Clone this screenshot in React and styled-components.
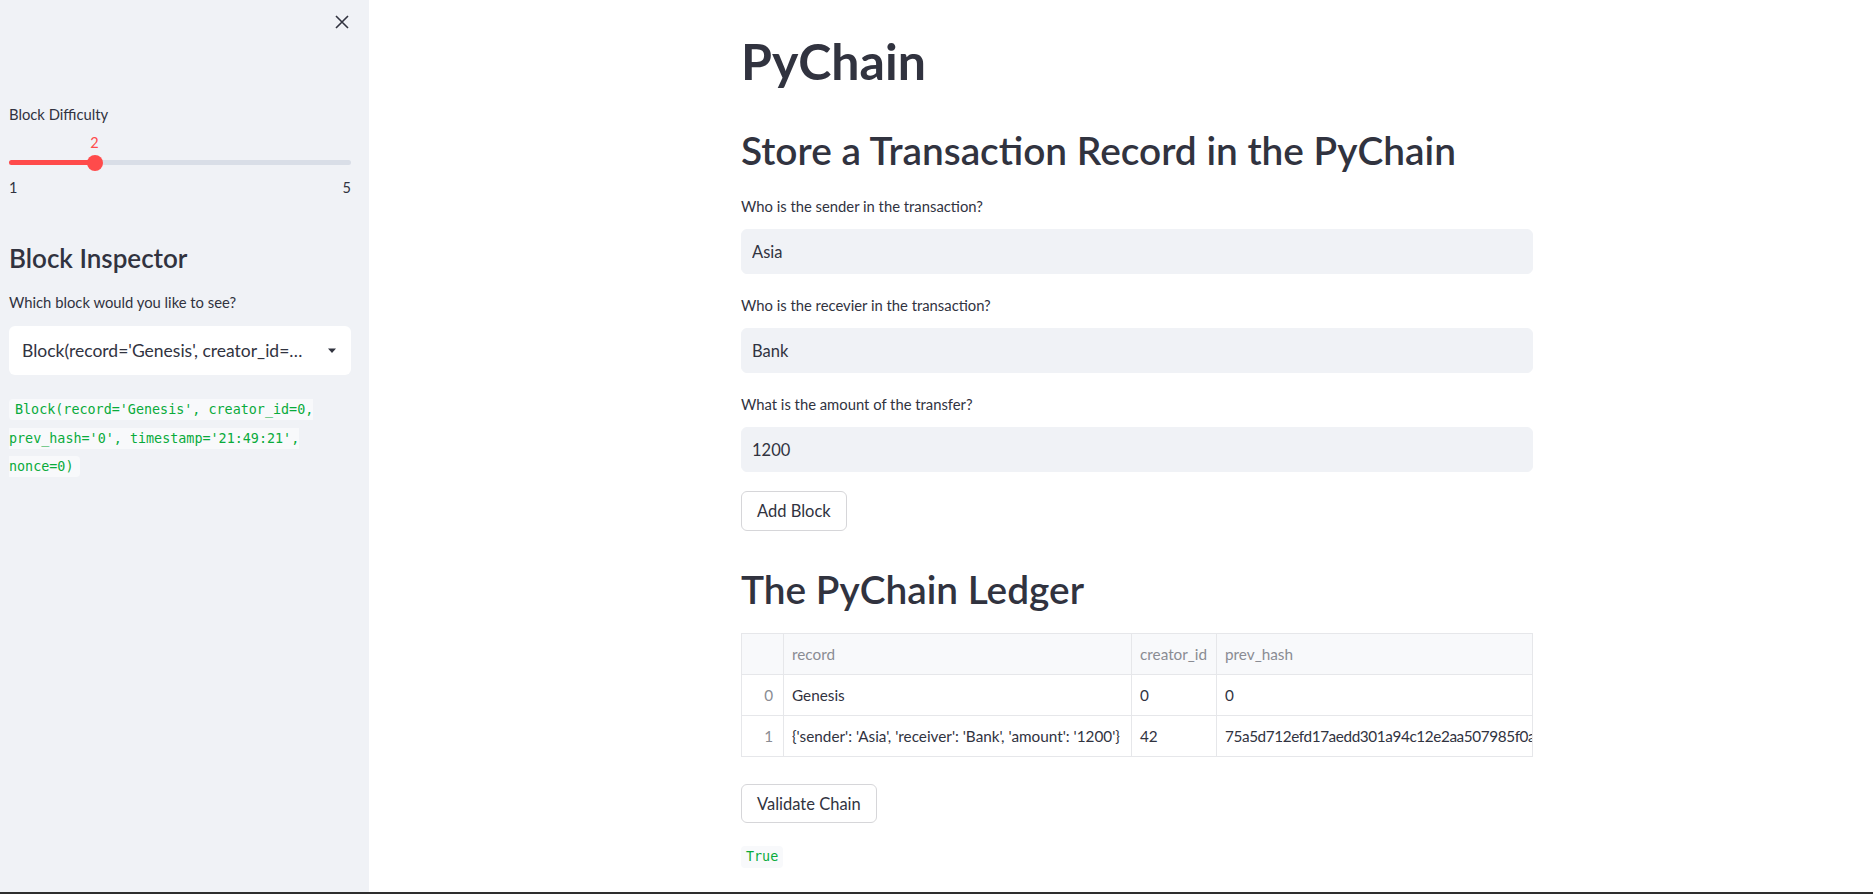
import React from 'react'
import styled, { createGlobalStyle } from 'styled-components'

const GlobalStyle = createGlobalStyle`
  body {
    margin: 0;
    font-family: Lato, "Open Sans", sans-serif;
    color: #31333f;
    background: #ffffff;
  }
  * { box-sizing: border-box; }
`;

const Page = styled.div`
  display: flex;
  height: 894px;
  border-bottom: 2px solid #2e2e2e;
  overflow: hidden;
`;

const Sidebar = styled.aside`
  width: 369px;
  flex-shrink: 0;
  background: #f0f2f6;
  padding: 0 18px 0 9px;
  display: flex;
  flex-direction: column;
`;

const TopBar = styled.div`
  height: 44px;
  display: flex;
  justify-content: flex-end;
  align-items: center;
  margin-right: -18px;
  padding-right: 19px;
`;

const CloseButton = styled.button`
  border: none;
  background: none;
  padding: 0;
  width: 16px;
  height: 16px;
  display: flex;
  align-items: center;
  justify-content: center;
  color: #31333f;
`;

const Label = styled.div`
  font-size: 14.8px;
  line-height: 17px;
  color: #31333f;
  margin-top: ${p => p.top || 0}px;
  margin-bottom: ${p => p.bottom || 0}px;
`;

const SliderTrack = styled.div`
  position: relative;
  height: 5px;
  margin-top: 37px;
  border-radius: 3px;
  background: #d9dee7;
`;

const SliderFill = styled.div`
  height: 100%;
  border-radius: 3px;
  background: #ff4b4b;
`;

const SliderThumb = styled.div`
  position: absolute;
  top: 50%;
  width: 16px;
  height: 16px;
  border-radius: 50%;
  background: #ff4b4b;
  transform: translate(-50%, -50%);
`;

const SliderValue = styled.div`
  position: absolute;
  top: -26px;
  font-size: 14.5px;
  line-height: 18px;
  color: #ff4b4b;
  transform: translateX(-50%);
`;

const TickRow = styled.div`
  display: flex;
  justify-content: space-between;
  margin-top: 14px;
  font-size: 14.5px;
  line-height: 18px;
  color: #31333f;
`;

const SideHeading = styled.h2`
  margin: 45px 0 0;
  font-size: 26px;
  line-height: 32px;
  font-weight: 600;
  color: #31333f;
`;

const Select = styled.div`
  height: 49px;
  margin-top: 15px;
  background: #ffffff;
  border-radius: 6px;
  display: flex;
  align-items: center;
  padding: 0 14px 0 13px;
  gap: 22px;
`;

const SelectText = styled.div`
  flex: 1;
  min-width: 0;
  font-size: 17.5px;
  white-space: nowrap;
  overflow: hidden;
  text-overflow: ellipsis;
`;

const CodeBlock = styled.div`
  margin-top: 21px;
  line-height: 28.5px;
  font-family: "DejaVu Sans Mono", "Liberation Mono", monospace;
  font-size: 13.4px;
`;

const InlineCode = styled.code`
  font-family: inherit;
  color: #09ab3b;
  background: #f8f9fb;
  padding: 3px 6px;
  border-radius: 4px;
`;

const Main = styled.main`
  flex: 1;
  padding-left: 372px;
`;

const Content = styled.div`
  width: 792px;
  display: flex;
  flex-direction: column;
  align-items: flex-start;
`;

const Title = styled.h1`
  margin: 31px 0 0;
  font-size: 50px;
  line-height: 60px;
  font-weight: 700;
  color: #31333f;
`;

const Heading = styled.h2`
  margin: ${p => p.top}px 0 0;
  font-size: 38.8px;
  line-height: 46px;
  font-weight: 600;
  color: #31333f;
`;

const Field = styled.div`
  width: 100%;
  margin-top: ${p => p.top}px;
`;

const TextInput = styled.input`
  width: 100%;
  height: 45px;
  border: 1px solid #f0f2f6;
  border-radius: 6px;
  background: #f0f2f6;
  padding: 0 10px;
  font-family: inherit;
  font-size: 16.5px;
  color: #31333f;
  outline: none;
`;

const Button = styled.button`
  margin-top: ${p => p.top}px;
  height: ${p => p.h}px;
  padding: 0 15px;
  border: 1px solid #d6d6d9;
  border-radius: 6px;
  background: #ffffff;
  font-family: inherit;
  font-size: 16.5px;
  color: #31333f;
`;

const TableFrame = styled.div`
  width: 100%;
  margin-top: 21px;
  border: 1px solid #e6e7ea;
  overflow: hidden;
`;

const Table = styled.table`
  border-collapse: collapse;
  table-layout: fixed;
  width: 1200px;
  margin: -1px;
  font-size: 15.3px;
`;

const Th = styled.th`
  height: 41px;
  padding: 0 8px;
  border: 1px solid #e6e7ea;
  background: #f8f9fb;
  color: #8a8c93;
  font-weight: 400;
  text-align: left;
  white-space: nowrap;
  overflow: hidden;
`;

const Td = styled.td`
  height: 41px;
  padding: 0 ${p => (p.index ? 10 : 8)}px;
  border: 1px solid #e6e7ea;
  color: ${p => (p.index ? '#8a8c93' : '#31333f')};
  text-align: ${p => (p.index ? 'right' : 'left')};
  letter-spacing: ${p => (p.tight ? '-0.4px' : 'normal')};
  white-space: nowrap;
  overflow: hidden;
`;

const Result = styled.code`
  margin-top: 23px;
  height: 22px;
  line-height: 22px;
  padding: 0 5px;
  border-radius: 4px;
  background: #f8f9fb;
  color: #09ab3b;
  font-family: "DejaVu Sans Mono", "Liberation Mono", monospace;
  font-size: 13.4px;
`;

const block = "Block(record='Genesis', creator_id=0, prev_hash='0', timestamp='21:49:21', nonce=0)";

const rows = [
  ['0', 'Genesis', '0', '0', '21:49:21', '0'],
  ['1', "{'sender': 'Asia', 'receiver': 'Bank', 'amount': '1200'}", '42',
    '75a5d712efd17aedd301a94c12e2aa507985f0a9c1b86e4d3f2a07b6', '21:50:04', '118'],
];

function Slider({ min, max, value }) {
  const pct = ((value - min) / (max - min)) * 100;
  return (
    <>
      <SliderTrack>
        <SliderFill style={{ width: `${pct}%` }} />
        <SliderThumb style={{ left: `${pct}%` }} />
        <SliderValue style={{ left: `${pct}%` }}>{value}</SliderValue>
      </SliderTrack>
      <TickRow>
        <span>{min}</span>
        <span>{max}</span>
      </TickRow>
    </>
  );
}

export default function App() {
  return (
    <Page>
      <GlobalStyle />
      <Sidebar>
        <TopBar>
          <CloseButton>
            <svg width="14" height="14" viewBox="0 0 14 14">
              <path d="M1 1 L13 13 M13 1 L1 13" stroke="#31333f" strokeWidth="1.6" />
            </svg>
          </CloseButton>
        </TopBar>
        <Label top={62}>Block Difficulty</Label>
        <Slider min={1} max={5} value={2} />
        <SideHeading>Block Inspector</SideHeading>
        <Label top={20}>Which block would you like to see?</Label>
        <Select>
          <SelectText>{block}</SelectText>
          <svg width="10" height="6" viewBox="0 0 10 6">
            <path d="M1 0.5 L9 0.5 L5 5 Z" fill="#31333f" />
          </svg>
        </Select>
        <CodeBlock>
          <InlineCode>{block}</InlineCode>
        </CodeBlock>
      </Sidebar>
      <Main>
        <Content>
          <Title>PyChain</Title>
          <Heading top={36}>Store a Transaction Record in the PyChain</Heading>
          <Field top={25}>
            <Label bottom={14}>Who is the sender in the transaction?</Label>
            <TextInput defaultValue="Asia" readOnly />
          </Field>
          <Field top={23}>
            <Label bottom={14}>Who is the recevier in the transaction?</Label>
            <TextInput defaultValue="Bank" readOnly />
          </Field>
          <Field top={23}>
            <Label bottom={14}>What is the amount of the transfer?</Label>
            <TextInput defaultValue="1200" readOnly />
          </Field>
          <Button top={19} h={40}>Add Block</Button>
          <Heading top={35}>The PyChain Ledger</Heading>
          <TableFrame>
            <Table>
              <colgroup>
                <col style={{ width: 42 }} />
                <col style={{ width: 348 }} />
                <col style={{ width: 85 }} />
                <col style={{ width: 480 }} />
                <col style={{ width: 120 }} />
                <col style={{ width: 125 }} />
              </colgroup>
              <thead>
                <tr>
                  <Th />
                  <Th>record</Th>
                  <Th>creator_id</Th>
                  <Th>prev_hash</Th>
                  <Th>timestamp</Th>
                  <Th>nonce</Th>
                </tr>
              </thead>
              <tbody>
                {rows.map(r => (
                  <tr key={r[0]}>
                    <Td index>{r[0]}</Td>
                    {r.slice(1).map((c, i) => <Td key={i} tight={i === 2}>{c}</Td>)}
                  </tr>
                ))}
              </tbody>
            </Table>
          </TableFrame>
          <Button top={27} h={39}>Validate Chain</Button>
          <Result>True</Result>
        </Content>
      </Main>
    </Page>
  );
}
